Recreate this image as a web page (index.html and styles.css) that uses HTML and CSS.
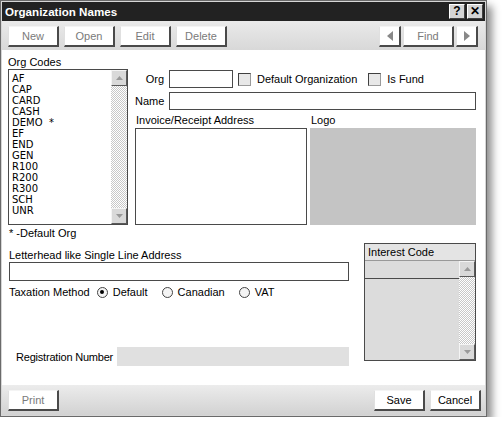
FILE: index.html
```html
<!DOCTYPE html>
<html>
<head>
<meta charset="utf-8">
<link rel="stylesheet" href="styles.css">
</head>
<body>
<div class="window">
  <div class="titlebar">
    <span class="title">Organization Names</span>
    <div class="tbtns">
      <span class="tbtn">?</span>
      <span class="tbtn">✕</span>
    </div>
  </div>
  <div class="toolbar">
    <div class="group">
      <button class="btn dis">New</button>
      <button class="btn dis">Open</button>
      <button class="btn dis">Edit</button>
      <button class="btn dis">Delete</button>
    </div>
    <div class="group nav">
      <button class="btn arrow"><svg width="6" height="10" viewBox="0 0 6 10"><path d="M6 0 L0 5 L6 10 Z" fill="#888"/></svg></button>
      <button class="btn dis">Find</button>
      <button class="btn arrow"><svg width="6" height="10" viewBox="0 0 6 10"><path d="M0 0 L6 5 L0 10 Z" fill="#888"/></svg></button>
    </div>
  </div>
  <div class="content">
    <div class="top">
      <div class="codes">
        <div class="lbl">Org Codes</div>
        <div class="listbox">
          <ul class="items">
            <li>AF</li><li>CAP</li><li>CARD</li><li>CASH</li><li>DEMO&nbsp;&nbsp;*</li><li>EF</li><li>END</li><li>GEN</li><li>R100</li><li>R200</li><li>R300</li><li>SCH</li><li>UNR</li>
          </ul>
          <div class="scroll">
            <span class="sbtn"><svg width="7" height="4" viewBox="0 0 7 4"><path d="M0 4 L3.5 0 L7 4 Z" fill="#999"/></svg></span>
            <span class="track"></span>
            <span class="sbtn"><svg width="7" height="4" viewBox="0 0 7 4"><path d="M0 0 L3.5 4 L7 0 Z" fill="#999"/></svg></span>
          </div>
        </div>
      </div>
      <div class="main">
        <div class="row org">
          <span class="flbl">Org</span>
          <span class="input orgin"></span>
          <span class="check"></span><span class="ctext">Default Organization</span>
          <span class="check fund"></span><span class="ctext">Is Fund</span>
        </div>
        <div class="row">
          <span class="flbl">Name</span>
          <span class="input grow"></span>
        </div>
        <div class="boxes">
          <div class="addr">
            <div class="lbl">Invoice/Receipt Address</div>
            <div class="input addrbox"></div>
          </div>
          <div class="logo">
            <div class="lbl">Logo</div>
            <div class="logobox"></div>
          </div>
        </div>
      </div>
    </div>
    <div class="bottom">
      <div class="lower">
        <div class="lbl">* -Default Org</div>
        <div class="lbl lh">Letterhead like Single Line Address</div>
        <div class="input single"></div>
        <div class="tax">
          <span>Taxation Method</span>
          <span class="opt"><span class="radio on"></span>Default</span>
          <span class="opt"><span class="radio"></span>Canadian</span>
          <span class="opt"><span class="radio"></span>VAT</span>
        </div>
        <div class="reg">
          <span class="reglbl">Registration Number</span>
          <span class="regbox"></span>
        </div>
      </div>
      <div class="interest">
        <div class="ihead">Interest Code</div>
        <div class="ibody">
          <div class="icol">
            <div class="irow"></div>
          </div>
          <div class="scroll">
            <span class="sbtn"><svg width="7" height="4" viewBox="0 0 7 4"><path d="M0 4 L3.5 0 L7 4 Z" fill="#999"/></svg></span>
            <span class="track"></span>
            <span class="sbtn"><svg width="7" height="4" viewBox="0 0 7 4"><path d="M0 0 L3.5 4 L7 0 Z" fill="#999"/></svg></span>
          </div>
        </div>
      </div>
    </div>
  </div>
  <div class="footer">
    <button class="btn dis">Print</button>
    <div class="group">
      <button class="btn">Save</button>
      <button class="btn">Cancel</button>
    </div>
  </div>
</div>
</body>
</html>
```
FILE: styles.css
```css
* { box-sizing: border-box; }
body {
  margin: 0;
  background: #fff;
  font-family: "Liberation Sans", Arial, sans-serif;
  font-size: 11px;
  color: #000;
}
.window {
  width: 487px;
  height: 417px;
  border: 1px solid #6a6a6a;
  padding: 1px;
  background: #d6d6d6;
  box-shadow: 5px 6px 8px rgba(0,0,0,0.45);
  display: flex;
  flex-direction: column;
}
.titlebar {
  height: 19px;
  background: #222;
  display: flex;
  align-items: center;
  justify-content: space-between;
  padding: 0 2px 0 3px;
  flex: none;
}
.title {
  color: #fff;
  font-weight: bold;
  font-size: 11.6px;
}
.tbtns { display: flex; gap: 2px; }
.tbtn {
  width: 16px;
  height: 15px;
  background: #d4d4d4;
  border-top: 1px solid #fff;
  border-left: 1px solid #fff;
  border-right: 1px solid #404040;
  border-bottom: 1px solid #404040;
  font-weight: bold;
  font-size: 12px;
  line-height: 13px;
  text-align: center;
  color: #000;
}
.toolbar {
  height: 29px;
  flex: none;
  background: linear-gradient(#eaeaea, #d8d8d8);
  display: flex;
  justify-content: space-between;
  padding: 5px 7px 0 6px;
}
.group { display: flex; gap: 5px; }
.nav { gap: 2px; }
.btn {
  width: 51px;
  height: 21px;
  padding: 0;
  margin: 0;
  font-family: "Liberation Sans", Arial, sans-serif;
  font-size: 11px;
  color: #000;
  background: #fff;
  border: none;
  border-top: 1px solid #f4f4f4;
  border-left: 1px solid #e0e0e0;
  border-right: 2px solid #4a4a4a;
  border-bottom: 2px solid #4a4a4a;
  display: flex;
  align-items: center;
  justify-content: center;
}
.btn.dis { color: #7a7a7a; }
.btn.arrow { width: 22px; }
.content {
  flex: 1;
  background: #fff;
  padding: 0 9px 0 6px;
  display: flex;
  flex-direction: column;
}
.top { display: flex; gap: 7px; height: 175px; }
.codes { width: 120px; padding-top: 6px; }
.lbl { line-height: 13px; height: 13px; white-space: nowrap; }
.listbox {
  height: 156px;
  border: 1px solid #4a4a4a;
  display: flex;
}
.items {
  flex: 1;
  list-style: none;
  margin: 0;
  padding: 3px 0 0 3px;
  font-family: "DejaVu Sans", sans-serif;
  font-size: 10px;
  line-height: 11px;
}
.scroll {
  width: 16px;
  display: flex;
  flex-direction: column;
}
.sbtn {
  height: 16px;
  flex: none;
  background: #d9d9d9;
  border-top: 1px solid #f4f4f4;
  border-left: 1px solid #f4f4f4;
  border-right: 1px solid #5a5a5a;
  border-bottom: 1px solid #5a5a5a;
  display: flex;
  align-items: center;
  justify-content: center;
}
.track {
  flex: 1;
  background: repeating-conic-gradient(#c8c8c8 0 25%, #fff 0 50%) 0 0 / 2px 2px;
}
.main { flex: 1; display: flex; flex-direction: column; }
.row { display: flex; align-items: center; height: 18px; margin-top: 4px; }
.row.org { margin-top: 20px; }
.flbl { width: 29px; text-align: right; margin-right: 5px; flex: none; }
.input { border: 1px solid #4a4a4a; background: #fff; }
.row .input { height: 18px; }
.orgin { width: 64px; }
.grow { flex: 1; }
.ctext { white-space: nowrap; }
.check {
  width: 13px;
  height: 13px;
  margin-left: 5px;
  margin-right: 6px;
  background: #e8e8e8;
  border-top: 1px solid #404040;
  border-left: 1px solid #404040;
  border-right: 1px solid #9a9a9a;
  border-bottom: 1px solid #9a9a9a;
  flex: none;
}
.check.fund { margin-left: 11px; }
.boxes { display: flex; gap: 3px; margin-top: 4px; }
.addr .lbl, .logo .lbl { padding-left: 1px; height: 14px; }
.addrbox { width: 172px; height: 97px; }
.logo { flex: 1; }
.logobox { height: 97px; background: #c4c4c4; }
.bottom { display: flex; gap: 15px; flex: 1; }
.lower { width: 341px; padding-top: 2px; padding-left: 1px; }
.lh { margin-top: 9px; }
.single { height: 19px; }
.tax { display: flex; align-items: center; height: 18px; margin-top: 2px; white-space: nowrap; }
.opt { display: flex; align-items: center; margin-left: 7px; }
.opt + .opt { margin-left: 14px; }
.radio {
  width: 11px;
  height: 11px;
  border-radius: 50%;
  border: 1px solid #444;
  background: #f4f4f4;
  margin-right: 5px;
  position: relative;
}
.radio.on::after {
  content: "";
  position: absolute;
  left: 2.5px;
  top: 2.5px;
  width: 4px;
  height: 4px;
  border-radius: 50%;
  background: #000;
}
.reg { display: flex; align-items: center; margin-top: 46px; height: 19px; padding-left: 7px; }
.reglbl { white-space: nowrap; flex: none; letter-spacing: -0.2px; }
.regbox { width: 232px; height: 19px; background: #e0e0e0; margin-left: auto; flex: none; }
.interest {
  width: 112px;
  height: 118px;
  margin-top: 18px;
  border: 1px solid #4a4a4a;
  background: #dcdcdc;
  display: flex;
  flex-direction: column;
}
.ihead {
  height: 17px;
  line-height: 16px;
  padding-left: 3px;
  background: #e4e4e4;
  border-bottom: 1px solid #999;
}
.ibody { flex: 1; display: flex; }
.icol { flex: 1; }
.irow { height: 18px; border-bottom: 1px solid #4a4a4a; background: #dcdcdc; }
.footer {
  height: 30px;
  flex: none;
  background: linear-gradient(#ececec, #d2d2d2);
  display: flex;
  justify-content: space-between;
  padding: 5px 4px 0 6px;
}
```
